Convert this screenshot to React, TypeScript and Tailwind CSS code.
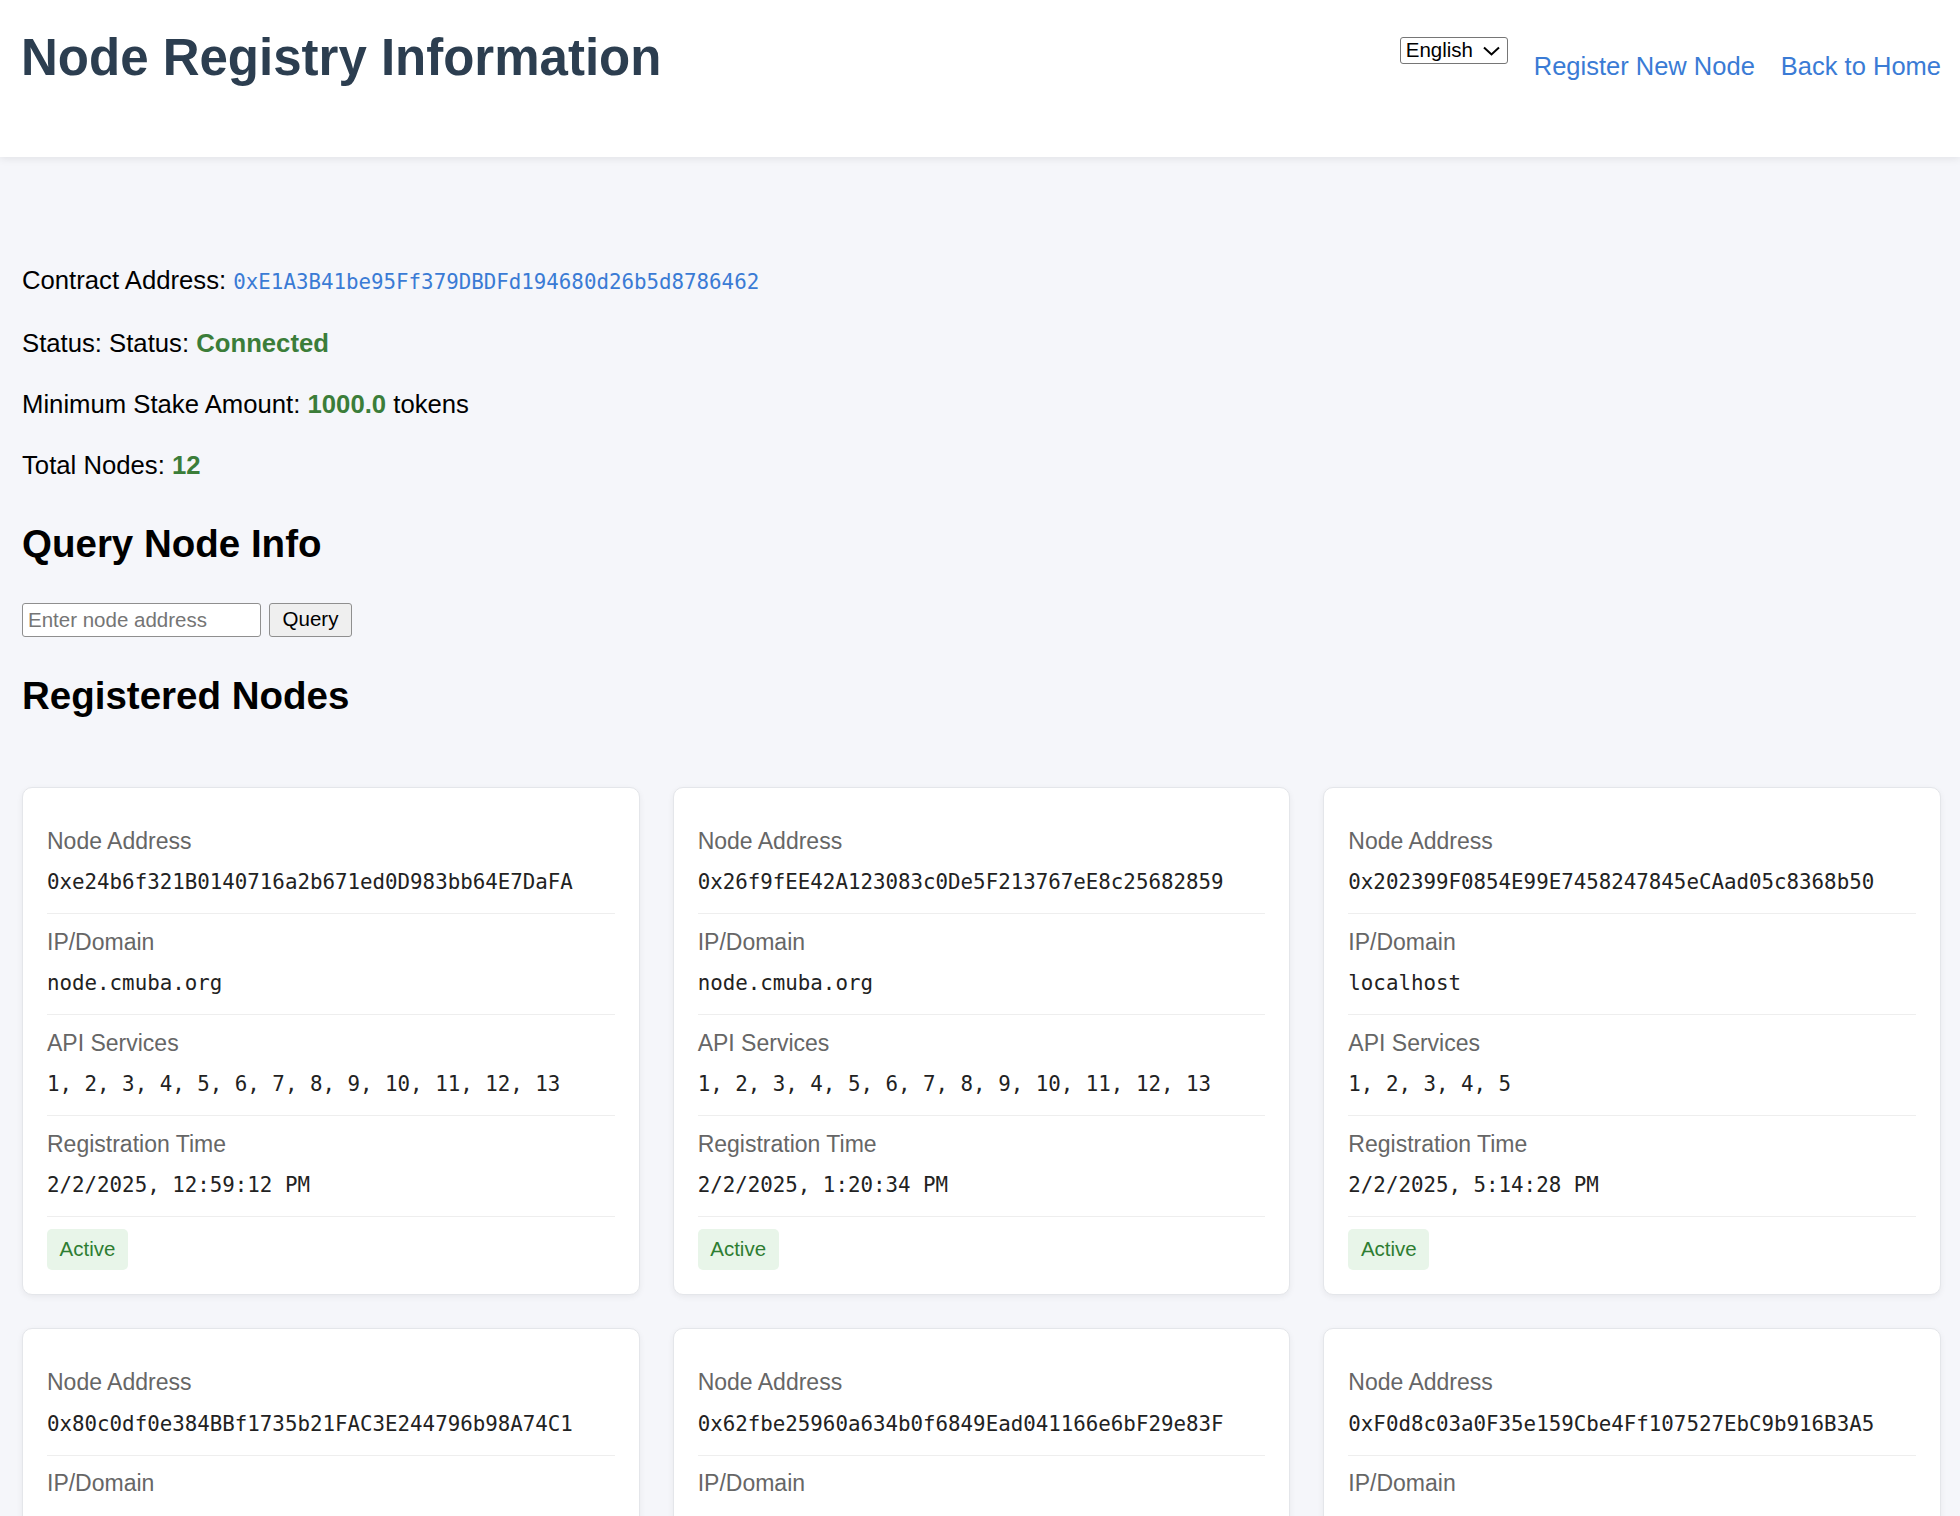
const nodes = [
  {
    address: "0xe24b6f321B0140716a2b671ed0D983bb64E7DaFA",
    domain: "node.cmuba.org",
    services: "1, 2, 3, 4, 5, 6, 7, 8, 9, 10, 11, 12, 13",
    time: "2/2/2025, 12:59:12 PM",
  },
  {
    address: "0x26f9fEE42A123083c0De5F213767eE8c25682859",
    domain: "node.cmuba.org",
    services: "1, 2, 3, 4, 5, 6, 7, 8, 9, 10, 11, 12, 13",
    time: "2/2/2025, 1:20:34 PM",
  },
  {
    address: "0x202399F0854E99E7458247845eCAad05c8368b50",
    domain: "localhost",
    services: "1, 2, 3, 4, 5",
    time: "2/2/2025, 5:14:28 PM",
  },
  {
    address: "0x80c0df0e384BBf1735b21FAC3E244796b98A74C1",
    domain: "node.cmuba.org",
    services: "1, 2, 3, 4, 5",
    time: "2/2/2025, 6:02:45 PM",
  },
  {
    address: "0x62fbe25960a634b0f6849Ead041166e6bF29e83F",
    domain: "node.cmuba.org",
    services: "1, 2, 3, 4, 5",
    time: "2/2/2025, 6:31:09 PM",
  },
  {
    address: "0xF0d8c03a0F35e159Cbe4Ff107527EbC9b916B3A5",
    domain: "node.cmuba.org",
    services: "1, 2, 3, 4, 5",
    time: "2/2/2025, 7:15:52 PM",
  },
];

const mono = { fontFamily: '"DejaVu Sans Mono", "Liberation Mono", monospace' };

const Field = ({ label, value }: { label: string; value: string }) => (
  <div className="border-b border-[#eeeeee] pt-[14.5px] pb-[18px]">
    <div className="text-[23px] leading-[27px] text-[#666666]">{label}</div>
    <div className="mt-[15.5px] text-[20.8px] leading-[25px] text-[#222222]" style={mono}>
      {value}
    </div>
  </div>
);

const NodeCard = ({ node }: { node: (typeof nodes)[number] }) => (
  <div className="rounded-[10px] border border-[#e4e6ea] bg-white px-[24px] pt-[25.5px] pb-[24px] shadow-[0_2px_6px_rgba(0,0,0,0.06)]">
    <Field label="Node Address" value={node.address} />
    <Field label="IP/Domain" value={node.domain} />
    <Field label="API Services" value={node.services} />
    <Field label="Registration Time" value={node.time} />
    <div className="pt-[12px]">
      <span className="inline-flex h-[41px] w-[81px] items-center justify-center rounded-[5px] bg-[#e8f5e9] text-[20.5px] text-[#2e7d32]">
        Active
      </span>
    </div>
  </div>
);

export default function App() {
  return (
    <div
      className="min-h-[1516px] bg-[#f5f6fa] text-black"
      style={{ fontFamily: '"Liberation Sans", Arial, sans-serif' }}
    >
      <header className="relative z-10 flex h-[157px] w-full items-start justify-between bg-white pl-[21px] pr-[19px] shadow-[0_2px_8px_rgba(0,0,0,0.08)]">
        <h1 className="mt-[28px] text-[51px] font-bold leading-[60px] text-[#2c3e50]">
          Node Registry Information
        </h1>
        <div className="flex items-start">
          <div className="mt-[37px] flex h-[27px] w-[108px] items-center justify-between rounded-[3px] border border-[#767676] bg-white pl-[5px] pr-[6px] text-[20.5px] text-black">
            <span>English</span>
            <svg width="19" height="12" viewBox="0 0 19 12" fill="none">
              <path d="M2 2.5 L9.5 9.5 L17 2.5" stroke="#000" strokeWidth="2" />
            </svg>
          </div>
          <nav className="ml-[26px] mt-[51px] flex gap-[26px] text-[25.5px] leading-[30px] text-[#3a7bd5]">
            <a href="#">Register New Node</a>
            <a href="#">Back to Home</a>
          </nav>
        </div>
      </header>

      <main className="pl-[22px] pr-[19px] pt-[108px] pb-[40px]">
        <div className="flex flex-col gap-[31px] text-[25.7px] leading-[30px]">
          <p>
            Contract Address:{" "}
            <span className="text-[20.8px] text-[#3a7bd5]" style={mono}>
              0xE1A3B41be95Ff379DBDFd194680d26b5d8786462
            </span>
          </p>
          <p>
            Status: Status: <span className="font-bold text-[#3b7d39]">Connected</span>
          </p>
          <p>
            Minimum Stake Amount: <span className="font-bold text-[#3b7d39]">1000.0</span> tokens
          </p>
          <p>
            Total Nodes: <span className="font-bold text-[#3b7d39]">12</span>
          </p>
        </div>

        <h2 className="mt-[42px] text-[38.5px] font-bold leading-[44px]">Query Node Info</h2>

        <div className="mt-[36.5px] flex items-center gap-[8px]">
          <input
            placeholder="Enter node address"
            className="h-[34px] w-[239px] rounded-[3px] border border-[#8f8f8f] bg-white px-[5px] text-[20.5px] placeholder:text-[#757575]"
          />
          <button className="h-[34px] w-[83px] rounded-[3px] border border-[#8f8f8f] bg-[#efefef] text-[20.5px] text-black">
            Query
          </button>
        </div>

        <h2 className="mt-[37px] text-[38.5px] font-bold leading-[44px]">Registered Nodes</h2>

        <div className="mt-[69px] grid grid-cols-3 gap-[33px]">
          {nodes.map((n) => (
            <NodeCard key={n.address} node={n} />
          ))}
        </div>
      </main>
    </div>
  );
}
